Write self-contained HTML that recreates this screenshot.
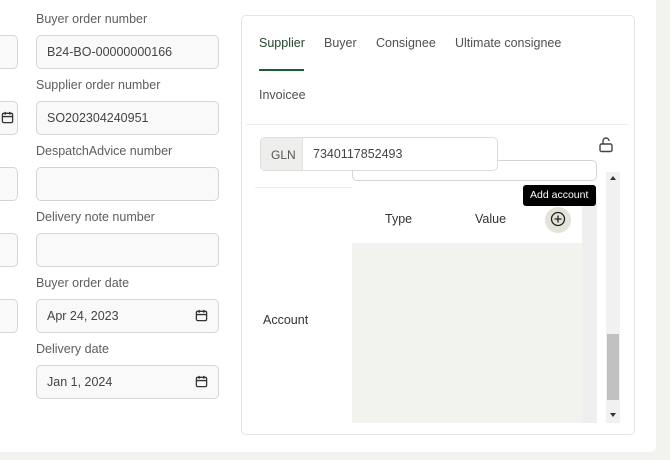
<!DOCTYPE html>
<html><head><style>
*{box-sizing:border-box;margin:0;padding:0}
body{width:670px;height:460px;background:#f2f2ee;position:relative;overflow:hidden;font-family:"Liberation Sans",sans-serif;}
.a{position:absolute}
.page{left:0;top:0;width:656px;height:452px;background:#fff;border-radius:0 0 6px 0}
.lbl{font-size:12.5px;color:#5b5f5c;left:36px}
.inp{left:36px;width:183px;height:34px;border:1px solid #d3d6d3;border-radius:5px;background:#f8f9f8;font-size:12.5px;color:#444;padding:9px 0 0 10px}
.lin{left:-10px;width:28px;height:34px;border:1px solid #d3d6d3;border-radius:5px;background:#f8f9f8}
.cal{position:absolute;right:10px;top:9px}
.tab{font-size:12.5px;color:#4d524e;top:36px}
</style></head><body>
<div class="a page"></div>
<div class="a lin" style="top:35px"></div>
<div class="a lin" style="top:101px"><svg class="cal" style="right:3px" width="13" height="13" viewBox="0 0 14 14" fill="none" stroke="#333" stroke-width="1.4"><rect x="1.5" y="2.5" width="11" height="10" rx="1.5"/><path d="M1.5 6h11M4.5 1v3M9.5 1v3"/></svg></div>
<div class="a lin" style="top:167px"></div>
<div class="a lin" style="top:233px"></div>
<div class="a lin" style="top:299px"></div>

<div class="a lbl" style="top:12px">Buyer order number</div>
<div class="a inp" style="top:35px">B24-BO-00000000166</div>
<div class="a lbl" style="top:78px">Supplier order number</div>
<div class="a inp" style="top:101px">SO202304240951</div>
<div class="a lbl" style="top:144px">DespatchAdvice number</div>
<div class="a inp" style="top:167px"></div>
<div class="a lbl" style="top:210px">Delivery note number</div>
<div class="a inp" style="top:233px"></div>
<div class="a lbl" style="top:276px">Buyer order date</div>
<div class="a inp" style="top:299px">Apr 24, 2023<svg class="cal" width="13" height="13" viewBox="0 0 14 14" fill="none" stroke="#333" stroke-width="1.4"><rect x="1.5" y="2.5" width="11" height="10" rx="1.5"/><path d="M1.5 6h11M4.5 1v3M9.5 1v3"/></svg></div>
<div class="a lbl" style="top:342px">Delivery date</div>
<div class="a inp" style="top:365px">Jan 1, 2024<svg class="cal" width="13" height="13" viewBox="0 0 14 14" fill="none" stroke="#333" stroke-width="1.4"><rect x="1.5" y="2.5" width="11" height="10" rx="1.5"/><path d="M1.5 6h11M4.5 1v3M9.5 1v3"/></svg></div>

<div class="a" style="left:241px;top:15px;width:394px;height:420px;border:1px solid #e3e5e3;border-radius:5px;background:#fff"></div>
<div class="a tab" style="left:259px;color:#24452f">Supplier</div>
<div class="a tab" style="left:324px">Buyer</div>
<div class="a tab" style="left:376px">Consignee</div>
<div class="a tab" style="left:455px">Ultimate consignee</div>
<div class="a" style="left:259px;top:69px;width:45px;height:2px;background:#1e5a34"></div>
<div class="a tab" style="left:259px;top:88px">Invoicee</div>
<div class="a" style="left:246px;top:124px;width:383px;height:1px;background:#eceeec"></div>

<div class="a" style="left:352px;top:160px;width:245px;height:21px;border:1px solid #d3d6d3;border-radius:5px;background:#fff"></div>
<div class="a" style="left:260px;top:137px;width:238px;height:34px;border:1px solid #dcdedc;border-radius:5px;background:#fff;overflow:hidden">
<div class="a" style="left:0;top:0;width:42px;height:34px;background:#eeeeec;border-right:1px solid #e2e2e0;font-size:12px;color:#555;padding:10px 0 0 10px">GLN</div>
<div class="a" style="left:52px;top:9px;font-size:12.5px;color:#444">7340117852493</div></div>
<svg class="a" style="left:598px;top:136px" width="16" height="17" viewBox="0 0 16 17" fill="none" stroke="#444" stroke-width="1.4"><rect x="2" y="8" width="12" height="7.5" rx="1.5"/><path d="M5 8V5a3 3 0 0 1 6 0"/></svg>

<div class="a" style="left:255px;top:187px;width:97px;height:1px;background:#eceeec"></div>
<div class="a" style="left:352px;top:195px;width:230px;height:48px;background:#fff"></div>
<div class="a" style="left:352px;top:243px;width:230px;height:180px;background:#f2f2ee"></div>
<div class="a" style="left:582px;top:195px;width:15px;height:228px;background:#efefef"></div>
<div class="a" style="left:385px;top:212px;font-size:12.5px;color:#333">Type</div>
<div class="a" style="left:475px;top:212px;font-size:12.5px;color:#333">Value</div>
<div class="a" style="left:545px;top:207px;width:26px;height:26px;border-radius:50%;background:#e3e3da"></div>
<svg class="a" style="left:550px;top:211px" width="16" height="16" viewBox="0 0 16 16" fill="none" stroke="#222" stroke-width="1.3"><circle cx="8" cy="8" r="6.5"/><path d="M8 4.5v7M4.5 8h7"/></svg>
<div class="a" style="left:523px;top:185px;width:73px;height:21px;background:#000;border-radius:3px;color:#fff;font-size:10.5px;padding:4px 0 0 7px">Add account</div>
<div class="a" style="left:263px;top:313px;font-size:12.5px;color:#333">Account</div>

<div class="a" style="left:606px;top:172px;width:14px;height:251px;background:#f1f1f1"></div>
<div class="a" style="left:607px;top:334px;width:12px;height:66px;background:#c1c1c1"></div>
<div class="a" style="left:610px;top:176px;width:0;height:0;border:3px solid transparent;border-bottom:4px solid #333;border-top:0"></div>
<div class="a" style="left:610px;top:413px;width:0;height:0;border:3px solid transparent;border-top:4px solid #333;border-bottom:0"></div>
</body></html>
